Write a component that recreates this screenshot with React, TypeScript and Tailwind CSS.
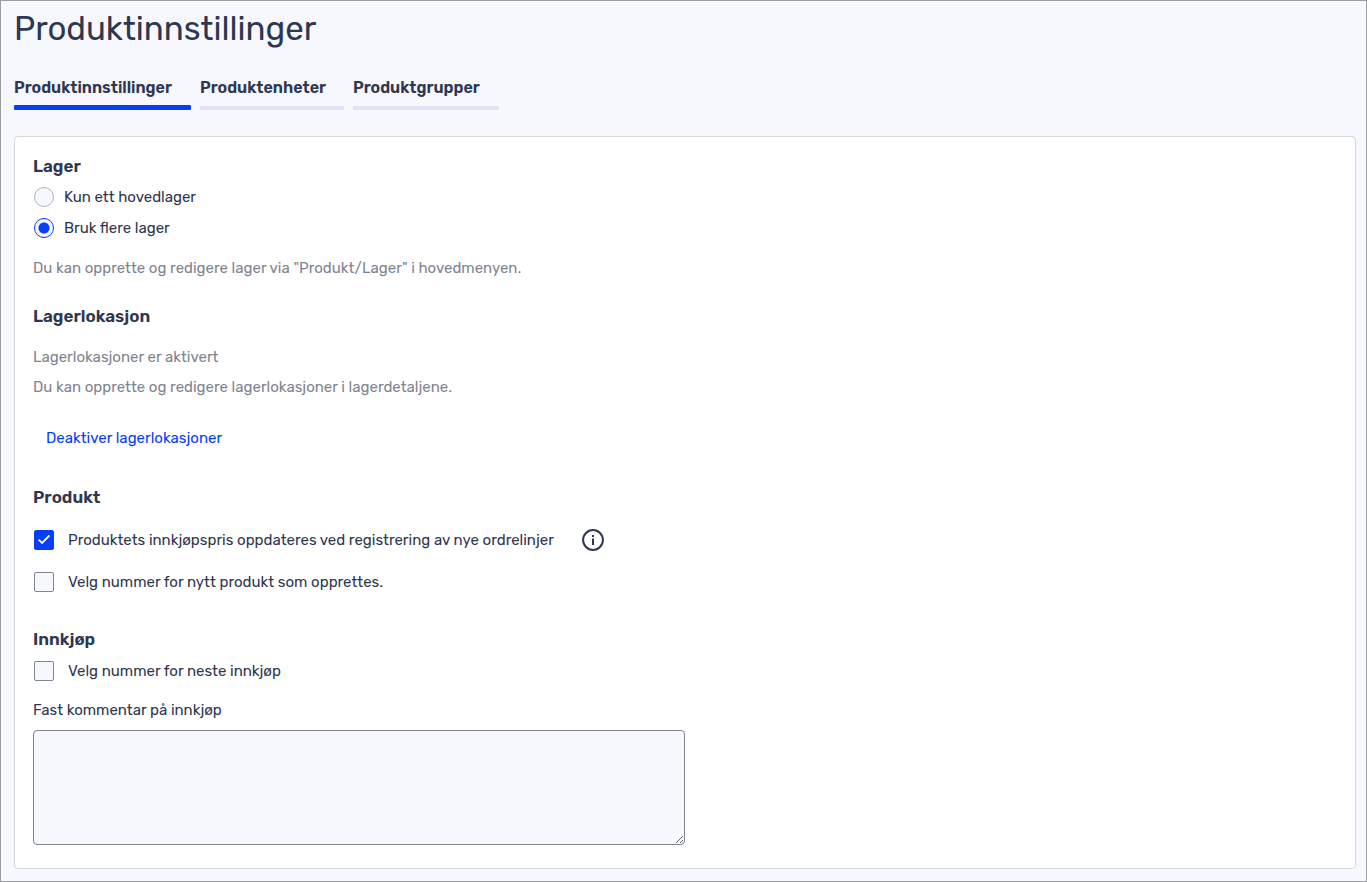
import React, { FC, ReactNode, useState } from 'react';

const tabs = [
	{ id: 'innstillinger', label: 'Produktinnstillinger', width: 'min-w-[177px]' },
	{ id: 'enheter', label: 'Produktenheter', width: 'min-w-[144px]' },
	{ id: 'grupper', label: 'Produktgrupper', width: 'min-w-[146px]' },
];

const Heading: FC<{ children: ReactNode }> = ({ children }) => (
	<h2 className="text-[17px] leading-[22px] font-semibold">{children}</h2>
);

const Hint: FC<{ children: ReactNode }> = ({ children }) => (
	<p className="leading-[22px] text-[#7f8490]">{children}</p>
);

type RadioProps = {
	label: string;
	checked: boolean;
	onChange: () => void;
};

const Radio: FC<RadioProps> = ({ label, checked, onChange }) => (
	<label className="flex items-center gap-2.5 pl-px leading-[22px]">
		<input
			type="radio"
			name="lager"
			checked={checked}
			onChange={onChange}
			className="size-5 shrink-0 appearance-none rounded-full border border-[#b0b3bb] bg-[#f6f8fd] checked:border-[#063ef9] checked:bg-[radial-gradient(circle,#063ef9_5px,#f6f8fd_6px)]"
		/>
		{label}
	</label>
);

const Checkbox: FC<{ label: string; defaultChecked?: boolean }> = ({
	label,
	defaultChecked,
}) => (
	<label className="flex items-center gap-3.5 pl-px leading-[22px]">
		<span className="grid shrink-0">
			<input
				type="checkbox"
				defaultChecked={defaultChecked}
				className="peer col-start-1 row-start-1 size-5 appearance-none rounded-xs border border-[#7f8490] bg-[#f6f8fd] checked:border-[#063ef9] checked:bg-[#063ef9]"
			/>
			<svg
				viewBox="0 0 20 20"
				fill="none"
				stroke="white"
				strokeWidth="1.8"
				className="pointer-events-none invisible col-start-1 row-start-1 size-5 peer-checked:visible"
			>
				<path d="M4.6 9.7 8.1 13 15.4 5.5" />
			</svg>
		</span>
		{label}
	</label>
);

const InfoIcon: FC = () => (
	<svg viewBox="0 0 22 22" fill="none" className="size-[22px]">
		<circle cx="11" cy="11" r="9.9" stroke="#2e374f" strokeWidth="2" />
		<path d="M11 9.5V16" stroke="#2e374f" strokeWidth="2" />
		<path d="M11 6V8" stroke="#2e374f" strokeWidth="2" />
	</svg>
);

const App: FC = () => {
	const [activeTab, setActiveTab] = useState<string>('innstillinger');
	const [multiple, setMultiple] = useState<boolean>(true);

	return (
		<div className="min-h-screen border border-[#9c9da3] bg-[#f6f8fd] pr-2.5 pb-3 pl-[13px] font-['Rubik','Roboto',sans-serif] text-[15px] text-[#2e374f]">
			<h1 className="pt-1.5 text-[33px] leading-[44px]">
				Produktinnstillinger
			</h1>
			<nav className="mt-[26px] flex gap-[9px]">
				{tabs.map((tab) => (
					<button
						key={tab.id}
						type="button"
						onClick={() => setActiveTab(tab.id)}
						className={
							'flex flex-col text-left ' + tab.width
						}
					>
						<span className="h-7 text-[16px] leading-[22px] font-semibold">
							{tab.label}
						</span>
						<span
							className={
								activeTab === tab.id
									? 'h-[5px] w-full rounded-[1px] bg-[#063ef9]'
									: 'mt-px h-1 w-full rounded-[1px] bg-[#dfe4fb]'
							}
						/>
					</button>
				))}
			</nav>
			<main className="mt-[26px] rounded border border-[#d5d7dd] bg-white px-[18px] pt-[18px] pb-[23px]">
				<section>
					<Heading>Lager</Heading>
					<div className="mt-[9px] mb-[18px] flex flex-col items-start gap-[9px]">
						<Radio
							label="Kun ett hovedlager"
							checked={!multiple}
							onChange={() => setMultiple(false)}
						/>
						<Radio
							label="Bruk flere lager"
							checked={multiple}
							onChange={() => setMultiple(true)}
						/>
					</div>
					<Hint>
						Du kan opprette og redigere lager via "Produkt/Lager" i
						hovedmenyen.
					</Hint>
				</section>
				<section className="mt-[26px]">
					<Heading>Lagerlokasjon</Heading>
					<div className="mt-[19px] flex flex-col gap-2">
						<Hint>Lagerlokasjoner er aktivert</Hint>
						<Hint>
							Du kan opprette og redigere lagerlokasjoner i
							lagerdetaljene.
						</Hint>
					</div>
					<button
						type="button"
						className="mt-5 px-[13px] py-[9px] leading-[22px] text-[#063ef9]"
					>
						Deaktiver lagerlokasjoner
					</button>
				</section>
				<section className="mt-7">
					<Heading>Produkt</Heading>
					<div className="mt-[21px] flex flex-col items-start gap-5">
						<div className="flex items-center gap-7">
							<Checkbox
								label="Produktets innkjøpspris oppdateres ved registrering av nye ordrelinjer"
								defaultChecked
							/>
							<button type="button" aria-label="Info">
								<InfoIcon />
							</button>
						</div>
						<Checkbox label="Velg nummer for nytt produkt som opprettes." />
					</div>
				</section>
				<section className="mt-[35px] flex flex-col items-start">
					<Heading>Innkjøp</Heading>
					<div className="mt-2.5">
						<Checkbox label="Velg nummer for neste innkjøp" />
					</div>
					<label htmlFor="kommentar" className="mt-[17px] leading-[22px]">
						Fast kommentar på innkjøp
					</label>
					<textarea
						id="kommentar"
						className="mt-[9px] h-[115px] w-full max-w-[652px] resize rounded border border-[#7f8490] bg-[#f6f8fd] p-2"
					/>
				</section>
			</main>
		</div>
	);
};

export default App;
